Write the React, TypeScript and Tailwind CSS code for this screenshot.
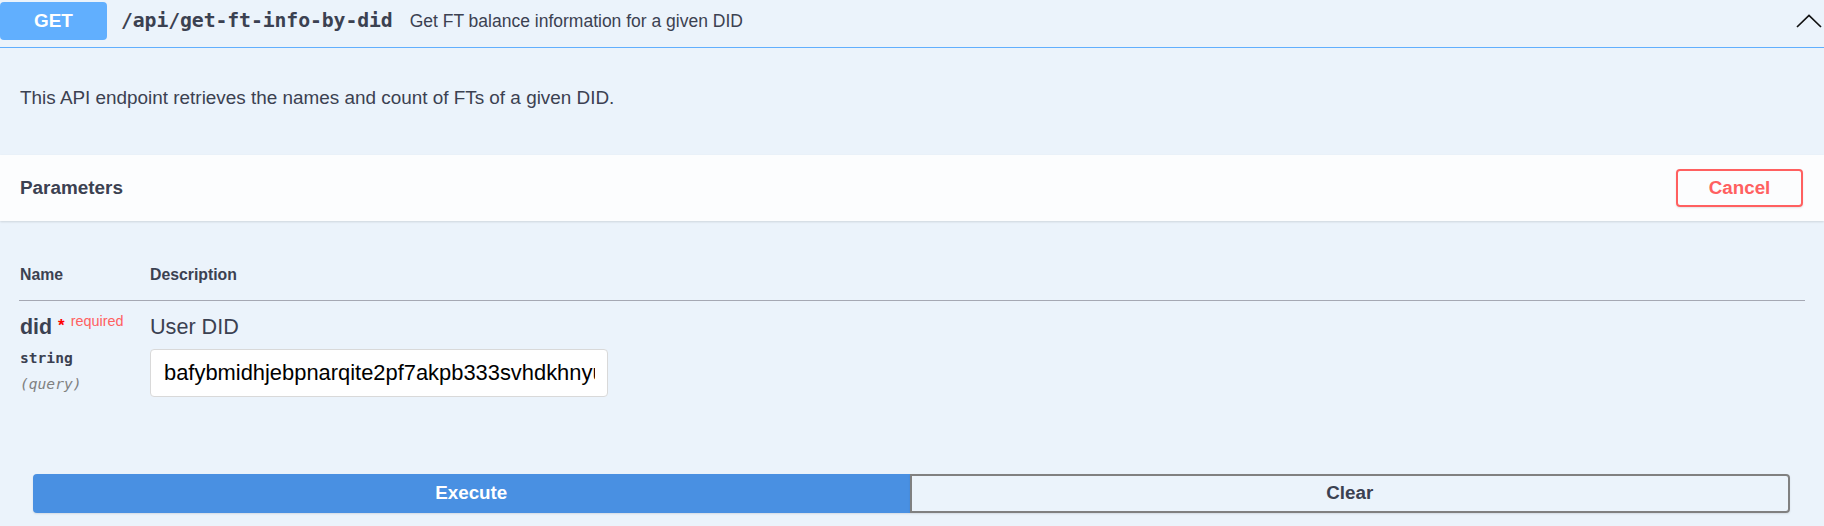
import React from 'react';

const sans = { fontFamily: '"Liberation Sans", Arial, sans-serif' };
const mono = { fontFamily: '"DejaVu Sans Mono", monospace' };

function ChevronUp() {
  return (
    <svg width="26" height="14" viewBox="0 0 26 14" className="block">
      <path d="M1 13 L13 1.5 L25 13" fill="none" stroke="#111" strokeWidth="1.7" />
    </svg>
  );
}

export default function App() {
  return (
    <div className="w-[1824px] h-[526px] overflow-hidden bg-[#ebf3fb] text-[#3b4151]" style={sans}>
      {/* summary */}
      <div className="h-[48px] flex items-start border-b border-[#61affe]">
        <div className="mt-[2px] w-[107px] h-[38px] rounded-[4px] bg-[#61affe] text-white font-bold text-[18.9px] flex items-center justify-center">
          GET
        </div>
        <div className="h-[42px] flex items-center">
          <span className="ml-[14px] text-[19.8px] font-bold text-[#3b4151] tracking-[-0.1px]" style={mono}>
            /api/get-ft-info-by-did
          </span>
          <span className="ml-[17px] text-[17.5px] text-[#3b4151]">Get FT balance information for a given DID</span>
        </div>
        <div className="ml-auto mt-[14px] mr-[2px]">
          <ChevronUp />
        </div>
      </div>

      {/* description */}
      <div className="h-[107px] px-[20px] pt-[39px]">
        <p className="text-[18.9px] leading-[22px]">This API endpoint retrieves the names and count of FTs of a given DID.</p>
      </div>

      {/* parameters header */}
      <div className="h-[66px] bg-[#fcfdfe] shadow-[0_1px_2px_rgba(0,0,0,0.12)] flex items-center px-[20px]">
        <h4 className="text-[18.9px] font-bold">Parameters</h4>
        <button className="ml-auto mr-[1px] w-[127px] h-[38px] rounded-[4px] border-2 border-[#ff6060] text-[#ff6060] font-bold text-[18.8px] shadow-[0_1px_2px_rgba(0,0,0,0.1)] bg-transparent">
          Cancel
        </button>
      </div>

      {/* table */}
      <div className="px-[19px] pt-[38px]">
        <div className="flex h-[42px] items-center border-b border-[#a5a8b3] text-[15.8px] font-bold">
          <div className="w-[131px] pl-[1px] -mt-[9px]">Name</div>
          <div className="-mt-[9px]">Description</div>
        </div>
        <div className="flex pt-[12px]">
          <div className="w-[131px] pl-[1px]">
            <div className="flex items-start h-[28px]">
              <span className="text-[21.4px] font-bold leading-[28px]">did</span>
              <span className="ml-[6px] text-[#ff0000] text-[17px] leading-[26px] font-bold">*</span>
              <span className="ml-[6px] text-[#ff6060] text-[14.4px] leading-[18px] -mt-[1px]">required</span>
            </div>
            <div className="mt-[8px] text-[14.6px] font-bold leading-[18px]" style={mono}>string</div>
            <div className="mt-[8px] text-[14.6px] italic text-[#808080] leading-[18px]" style={mono}>(query)</div>
          </div>
          <div>
            <div className="text-[21.6px] leading-[28px]">User DID</div>
            <input
              readOnly
              defaultValue="bafybmidhjebpnarqite2pf7akpb333svhdkhnyu"
              className="block mt-[8px] w-[458px] h-[48px] bg-white border border-[#d9d9d9] rounded-[4px] pl-[13px] pr-[12px] text-[21.9px] text-black outline-none"
              style={sans}
            />
          </div>
        </div>
      </div>

      {/* actions */}
      <div className="flex pl-[33px] pr-[34px] mt-[77px]">
        <button className="flex-1 h-[39px] bg-[#4990e2] text-white font-bold text-[18.8px] rounded-l-[4px] shadow-[0_1px_2px_rgba(0,0,0,0.1)]">
          Execute
        </button>
        <button className="flex-1 h-[39px] border-2 border-[#808080] text-[#3b4151] font-bold text-[18.8px] rounded-r-[4px] bg-transparent shadow-[0_1px_2px_rgba(0,0,0,0.1)]">
          Clear
        </button>
      </div>
    </div>
  );
}
